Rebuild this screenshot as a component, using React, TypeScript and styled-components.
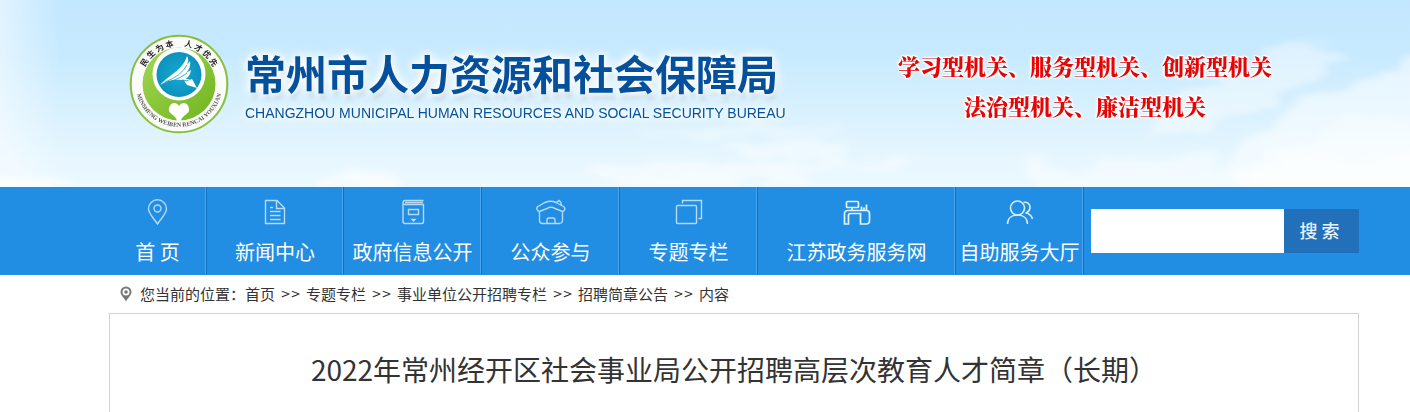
import React from "react";
import styled, { createGlobalStyle } from "styled-components";

const sans = `"Noto Sans CJK SC", "Liberation Sans", sans-serif`;

const GlobalStyle = createGlobalStyle`
  * { box-sizing: border-box; }
  body { margin: 0; background: #fff; color: #333; font-family: ${sans}; }
  a { color: inherit; text-decoration: none; }
`;

const Page = styled.div`
  display: flex;
  flex-direction: column;
  min-height: 100vh;
  overflow: hidden;
`;

const Banner = styled.header`
  position: relative;
  padding: 34px 51px 0 109px;
  height: 187px;
  background: linear-gradient(#c3e7ff 0, #c8eaff 30%, #d9f1fe 60%, #e8f7ff 88%, #ecf9ff 100%);
`;

const Sky = styled.svg`
  position: absolute;
  inset: 0;
  width: 100%;
  height: 100%;
`;

const BannerRow = styled.div`
  position: relative;
  display: flex;
  justify-content: space-between;
  padding: 0 87px 0 20px;
`;

const Brand = styled.a`
  display: flex;
  gap: 16px;
`;

const Emblem = styled.svg`
  width: 100px;
  height: 100px;
`;

const BrandText = styled.div`
  display: flex;
  flex-direction: column;
  width: 540px;
  padding-top: 16px;
  color: #05509c;
  white-space: nowrap;
`;

const BureauName = styled.h1`
  margin: 0;
  font-size: 41px;
  line-height: 44px;
  font-weight: 700;
  text-shadow: 0 0 6px #fff, 0 0 10px #fff, 0 0 14px #fff, 2px 6px 4px #b9cfdd;
`;

const BureauEnglish = styled.span`
  padding-top: 10px;
  font-family: "Liberation Sans", sans-serif;
  font-size: 14px;
  line-height: 18px;
  text-shadow: 0 0 5px #fff, 0 0 9px #fff, 0 0 12px #fff;
`;

const Slogan = styled.p`
  margin: 0;
  padding-top: 12px;
  font-family: "Noto Serif CJK SC", "Noto Sans CJK SC", serif;
  font-size: 22px;
  line-height: 40px;
  font-weight: 900;
  color: #e60505;
  text-align: center;
  white-space: nowrap;
  text-shadow: 1px 1px 1px #fff, -1px -1px 1px #fff, 1px -1px 1px #fff, -1px 1px 1px #fff, 0 0 3px #fff, 0 0 4px #fff;
`;

const Nav = styled.nav`
  display: flex;
  height: 88px;
  padding: 0 51px 1px 109px;
  background: #218de3;
`;

const NavItem = styled.a<{ $width: number }>`
  display: flex;
  flex: none;
  flex-direction: column;
  align-items: center;
  gap: 12px;
  width: ${(p) => p.$width}px;
  padding-top: 12px;
  border-right: 1px solid #1470be;
  box-shadow: inset -1px 0 #4aa5ec;
  color: #fff;
  font-size: 20px;
  line-height: 30px;
  white-space: nowrap;
`;

const NavIcon = styled.svg`
  width: 30px;
  height: 26px;
  flex: none;
  fill: none;
  stroke: #b5dbf8;
  stroke-width: 1.4;
`;

const Search = styled.form`
  display: flex;
  flex: 1;
  min-width: 0;
  height: 66px;
  padding: 22px 0 0 7px;
`;

const SearchInput = styled.input`
  flex: 1;
  min-width: 0;
  padding: 0 8px;
  border: 0;
  border-radius: 0;
  background: #fff;
  font: 16px ${sans};
`;

const SearchButton = styled.button`
  width: 75px;
  padding: 0 4px 2px 0;
  border: 0;
  background: #226fba;
  color: #e6f1fb;
  font: 500 18px ${sans};
`;

const Trail = styled.nav`
  display: flex;
  align-items: center;
  height: 38px;
  margin: 0 51px 0 109px;
  padding-left: 11px;
  font-size: 15px;
  line-height: 20px;
  white-space: nowrap;
`;

const TrailPin = styled.svg`
  width: 12px;
  height: 16px;
  margin-right: 8px;
`;

const Arrows = styled.span`
  width: 31px;
  text-align: center;
  font-family: "DejaVu Sans", sans-serif;
  font-size: 12px;
`;

const Article = styled.main`
  flex: 1;
  margin: 0 51px 0 109px;
  padding: 35px 20px 0;
  border: 1px solid #d3d3d3;
  border-bottom: 0;
`;

const ArticleTitle = styled.h2`
  margin: 0;
  font-size: 28px;
  line-height: 40px;
  font-weight: 400;
  text-align: center;
`;

const navItems = [
  {
    label: "首 页",
    width: 98,
    icon: (
      <>
        <path d="M14.500 25C10.500 19 5.500 14.500 5.500 9.800a9 9 0 0 1 18 0C23.500 14.500 18.500 19 14.500 25Z" />
        <circle cx="14.500" cy="9.500" r="3.500" />
      </>
    ),
  },
  {
    label: "新闻中心",
    width: 137,
    icon: (
      <>
        <path d="M5.500 1.500H17L24.500 9V24.500H5.500ZM16.500 1.500V9.500H24.500M10 8.500H13M10 12.500H20.500M10 16.500H20.500M10 20.500H20.500" />
      </>
    ),
  },
  {
    label: "政府信息公开",
    width: 138,
    icon: (
      <>
        <path d="M25.500 1.500H7a2 2 0 0 0 0 4H25.500V22.500a2 2 0 0 1-2 2H7a2 2 0 0 1-2-2V3.500M7 3.500H25M10.500 10.500H20.500V15.500H10.500Z" />
        <path d="M14 20.500H17L15.500 22Z" fill="#b5dbf8" />
      </>
    ),
  },
  {
    label: "公众参与",
    width: 138,
    icon: (
      <>
        <path d="M3.500 12.500C.5 12 0 8.500 2 7.500L9 3.500Q15 1 20 3.500L27.500 7.500C29.800 9 29 12 26.500 12.500L19 9.500Q15 7 11 9.500ZM3.500 12.500V21.500a3 3 0 0 0 3 3H23.500a3 3 0 0 0 3-3V12.500M11 24V21a2 2 0 0 1 2-2H17a2 2 0 0 1 2 2V24M20.500 3.500 23 1.500 25 3.500V6" />
      </>
    ),
  },
  {
    label: "专题专栏",
    width: 138,
    icon: (
      <>
        <rect x="2.500" y="6.500" width="20" height="18" rx="1" />
        <path d="M8.500 4.500V1.500H27.500V19.500H24.500" />
      </>
    ),
  },
  {
    label: "江苏政务服务网",
    width: 198,
    icon: (
      <g stroke="#e3f2fd" strokeWidth="1.700">
        <rect x="4.500" y="2.500" width="12" height="6" rx="1" />
        <path d="M10 9V11M19.500 7.500V11.500M24.500 5.500V11.500M22 8.500V11.500M6 11.500H24.500a3 3 0 0 1 3 3V22a3 3 0 0 1-3 3H18.500V14.500H8.500a2 2 0 0 0-2 2V25H2.500V14.500a3 3 0 0 1 3-3Z" />
      </g>
    ),
  },
  {
    label: "自助服务大厅",
    width: 128,
    icon: (
      <g stroke="#d6ecfc" strokeWidth="1.600">
        <circle cx="12.500" cy="9" r="7" />
        <path d="M2.500 25C2.500 19 7 16 12.500 16S22.500 19 22.500 25M18.500 3.500C22 2.500 25.500 5 25 9 24.500 12 22.500 13.500 20.500 14 24 14.500 26.500 16.500 27.500 20" />
      </g>
    ),
  },
];

const trail = ["首页", "专题专栏", "事业单位公开招聘专栏", "招聘简章公告", "内容"];

function SkyArt() {
  return (
    <Sky viewBox="0 0 1410 187" preserveAspectRatio="none" aria-hidden="true">
      <defs>
        <filter id="cloud" filterUnits="userSpaceOnUse" x="-80" y="-40" width="1600" height="300">
          <feTurbulence type="fractalNoise" baseFrequency="0.018 0.05" numOctaves="4" seed="8" />
          <feDisplacementMap in="SourceGraphic" scale="44" xChannelSelector="R" yChannelSelector="G" />
          <feGaussianBlur stdDeviation="5 3" />
        </filter>
        <linearGradient id="edge">
          <stop offset="0" stopColor="#fff" stopOpacity=".5" />
          <stop offset="1" stopColor="#fff" stopOpacity="0" />
        </linearGradient>
      </defs>
      <rect width="60" height="187" fill="url(#edge)" />
      <g fill="#fff" filter="url(#cloud)">
        <path d="M1140 130 1200 90 1250 60 1305 40 1350 52 1320 80 1270 105 1200 125Z" opacity=".42" />
        <path d="M1235 145 1310 100 1370 74 1500 40V230H1235Z" opacity=".5" />
        <path d="M1330 125 1500 100V230H1280L1240 165Z" opacity=".35" />
        <path d="M1020 165 1120 158 1250 162 1500 150V230H1060Z" opacity=".4" />
        <ellipse cx="740" cy="131" rx="110" ry="6" opacity=".3" />
        <ellipse cx="790" cy="151" rx="60" ry="7" opacity=".42" />
        <ellipse cx="700" cy="174" rx="110" ry="11" opacity=".5" />
        <ellipse cx="850" cy="162" rx="60" ry="7" opacity=".35" />
        <ellipse cx="360" cy="183" rx="45" ry="12" opacity=".6" />
        <ellipse cx="20" cy="185" rx="60" ry="12" opacity=".6" />
      </g>
    </Sky>
  );
}

function EmblemArt() {
  return (
    <Emblem viewBox="-50 -50 100 100" aria-hidden="true">
      <defs>
        <linearGradient id="leaf" x1="0" y1="0" x2="1" y2="1">
          <stop offset="0" stopColor="#a2d655" />
          <stop offset="1" stopColor="#6fb51d" />
        </linearGradient>
        <radialGradient id="sea">
          <stop offset="0" stopColor="#16a9d2" />
          <stop offset="1" stopColor="#0d92bd" />
        </radialGradient>
        <path id="upper" d="M-38 0A38 38 0 0 1 38 0" />
        <path id="lower" d="M-43.500 -5A43.700 43.700 0 1 0 43.500 -5" />
      </defs>
      <circle r="48.300" fill="#fbfbf9" stroke="#86bf3c" strokeWidth="2" />
      <circle r="36.500" fill="url(#leaf)" />
      <circle cy="-10" r="26.500" fill="#fff" />
      <circle cy="-9.500" r="22.500" fill="url(#sea)" />
      <g fill="#fff">
        <path d="M-19 1C-10 -9 4 -14 8 -28 10 -25 9 -22 8 -19L11 -23C12 -17 9 -13 7 -11L12 -14C11 -8 8 -5 4 -4 -5 -5 -12 -4 -19 1Z" />
        <path d="M4 -5 13 -5 18 4 8 1Z" />
      </g>
      <path
        d="M-14 -2Q2 -8 8 -19M-9 -2Q3 -7 8 -11M3 -4Q8 -2 12 -5"
        fill="none"
        stroke="#1399c4"
        strokeWidth=".8"
      />
      <path d="M0 22C-4 16-11 20-10 27-8 31-2 32-2 38H2C2 32 8 31 10 27 11 20 4 16 0 22Z" fill="#fff" />
      <text fontFamily="Noto Sans CJK SC" fontSize="8" fontWeight="700" fill="#222">
        <textPath href="#upper" startOffset="50%" textAnchor="middle">民 生 为 本 　人 才 优 先</textPath>
      </text>
      <text fontFamily="Liberation Serif" fontSize="6" fontWeight="700" fill="#555">
        <textPath href="#lower" startOffset="50%" textAnchor="middle">MINSHENG  WEIBEN  RENCAI  YOUXIAN</textPath>
      </text>
    </Emblem>
  );
}

export default function App() {
  return (
    <Page>
      <GlobalStyle />
      <Banner>
        <SkyArt />
        <BannerRow>
          <Brand href="#">
            <EmblemArt />
            <BrandText>
              <BureauName>常州市人力资源和社会保障局</BureauName>
              <BureauEnglish>CHANGZHOU MUNICIPAL HUMAN RESOURCES AND SOCIAL SECURITY BUREAU</BureauEnglish>
            </BrandText>
          </Brand>
          <Slogan>
            学习型机关、服务型机关、创新型机关
            <br />
            法治型机关、廉洁型机关
          </Slogan>
        </BannerRow>
      </Banner>
      <Nav>
        {navItems.map((item) => (
          <NavItem key={item.label} href="#" $width={item.width}>
            <NavIcon viewBox="0 0 30 26" aria-hidden="true">{item.icon}</NavIcon>
            {item.label}
          </NavItem>
        ))}
        <Search onSubmit={(e) => e.preventDefault()}>
          <SearchInput type="text" aria-label="搜索" />
          <SearchButton type="submit">搜 索</SearchButton>
        </Search>
      </Nav>
      <Trail>
        <TrailPin viewBox="0 0 12 16" aria-hidden="true">
          <path d="M6 15.500C4.500 12 .5 9.500 .5 6a5.500 5.500 0 0 1 11 0C11.500 9.500 7.500 12 6 15.500Z" fill="#777" />
          <circle cx="6" cy="6" r="3.500" fill="#fff" />
          <circle cx="6" cy="6" r="1.800" fill="#777" />
        </TrailPin>
        <span>您当前的位置：</span>
        {trail.map((name, i) => (
          <React.Fragment key={name}>
            {i > 0 && <Arrows>&gt;&gt;</Arrows>}
            {i < trail.length - 1 ? <a href="#">{name}</a> : <span>{name}</span>}
          </React.Fragment>
        ))}
      </Trail>
      <Article>
        <ArticleTitle>2022年常州经开区社会事业局公开招聘高层次教育人才简章（长期）</ArticleTitle>
      </Article>
    </Page>
  );
}
